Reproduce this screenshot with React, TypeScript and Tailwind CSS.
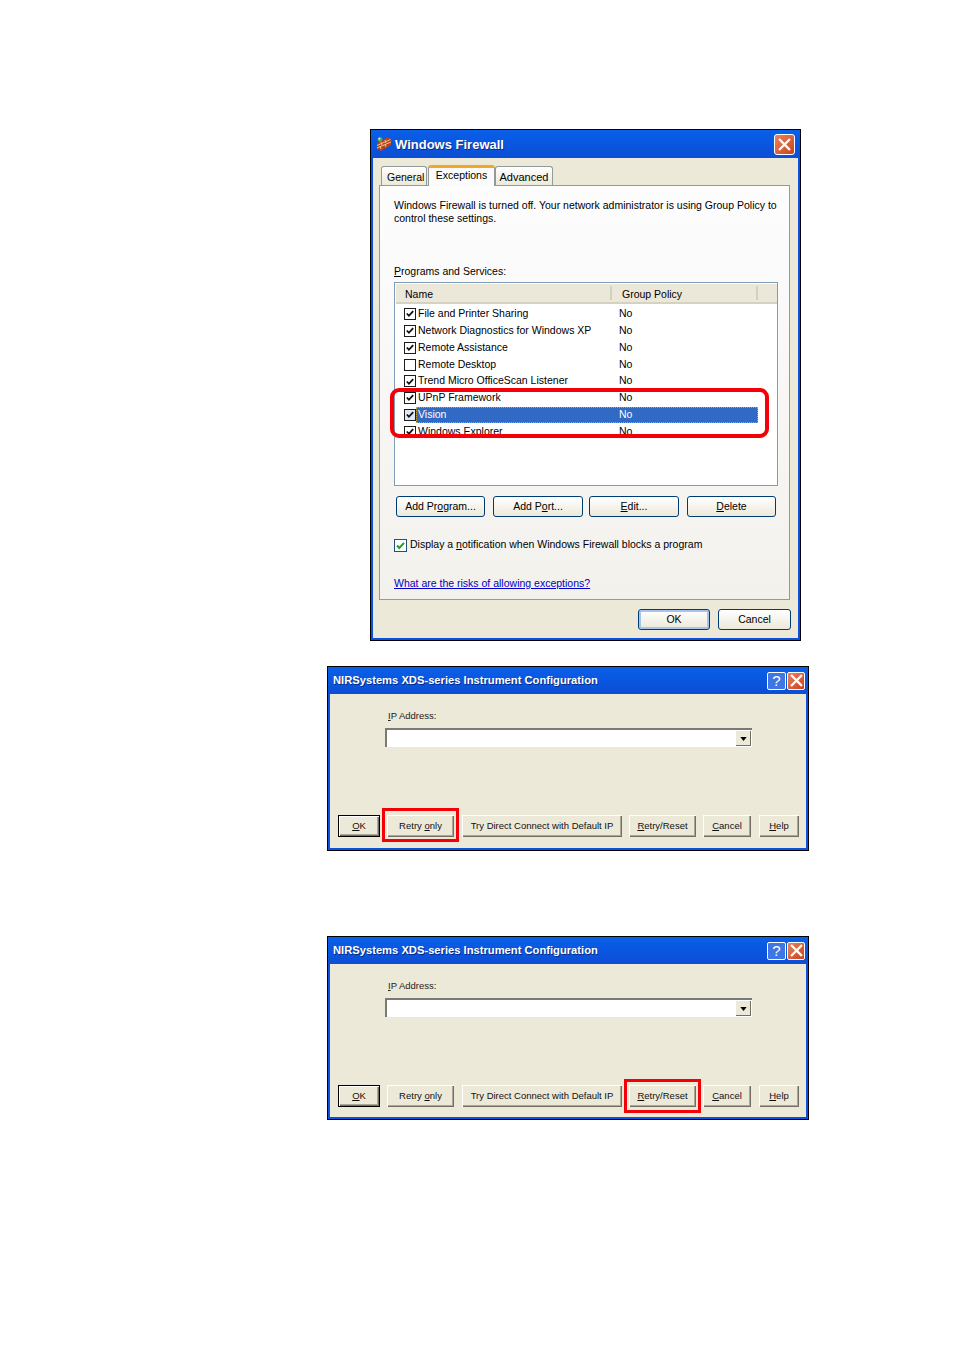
import React from "react";

const font = "font-['Liberation_Sans',Arial,sans-serif]";

const CheckIcon = ({ color = "#21a121" }: { color?: string }) => (
  <svg viewBox="0 0 11 11" className="w-[11px] h-[11px]">
    <path d="M2 5.5 L4.3 8 L9 2.8" fill="none" stroke={color} strokeWidth="2" />
  </svg>
);

const CloseGlyph = () => (
  <svg viewBox="0 0 14 14" className="w-[13px] h-[13px]">
    <path d="M2 2 L12 12 M12 2 L2 12" stroke="#fff" strokeWidth="2.4" strokeLinecap="square" />
  </svg>
);

const FirewallIcon = () => (
  <svg viewBox="0 0 16 16" className="w-[16px] h-[16px]">
    <path d="M1 7 L12 1 L15 3 L15 9 L5 15 L1 13 Z" fill="#b5401c" />
    <path d="M1 9.5 L14.5 3.5 M1 12 L15 6 M5 6 L6 9 M9 4 L10 7 M4 10 L5 13 M9 8.5 L10 11" stroke="#f2c28a" strokeWidth="1" fill="none" />
    <circle cx="4" cy="3.5" r="2.4" fill="#49b04a" />
    <circle cx="3.3" cy="2.8" r="1" fill="#bfe8ff" />
  </svg>
);

// XP luna push button
const XpButton = ({ className = "", children, isDefault = false }: { className?: string; children: React.ReactNode; isDefault?: boolean }) => (
  <button
    className={`h-[21px] rounded-[3px] border border-[#003c74] bg-gradient-to-b from-white to-[#ece9da] text-[10.5px] leading-none text-black ${isDefault ? "shadow-[inset_0_0_0_2px_#a9c4ec]" : ""} ${className}`}
  >
    {children}
  </button>
);

// Old style raised button for the instrument dialog
const ClassicButton = ({ className = "", children, isDefault = false }: { className?: string; children: React.ReactNode; isDefault?: boolean }) => (
  <button
    className={`block h-[22px] bg-[#ece9d8] text-[9.5px] leading-none text-[#111] shadow-[inset_1px_1px_0_#fff,inset_-1px_-1px_0_#716f64,inset_-2px_-2px_0_#aca899] ${isDefault ? "border border-black" : ""} ${className}`}
  >
    {children}
  </button>
);

const programs = [
  { name: "File and Printer Sharing", checked: true, h: "h-[17px]" },
  { name: "Network Diagnostics for Windows XP", checked: true, h: "h-[17px]" },
  { name: "Remote Assistance", checked: true, h: "h-[17px]" },
  { name: "Remote Desktop", checked: false, h: "h-[17px]" },
  { name: "Trend Micro OfficeScan Listener", checked: true, h: "h-[16px]" },
  { name: "UPnP Framework", checked: true, h: "h-[17px]" },
  { name: "Vision", checked: true, h: "h-[17px]", selected: true },
  { name: "Windows Explorer", checked: true, h: "h-[17px]" },
];

const FirewallDialog = () => (
  <div className="ml-[370px] w-[431px] border border-black bg-[#0a51e0] px-[2px] pb-[2px]">
    <div className="h-[28px] -mx-[2px] flex items-center pl-[5px] pr-[5px] bg-gradient-to-b from-[#0a60e8] via-[#0a56e0] to-[#0c4fd4]">
      <FirewallIcon />
      <span className="ml-[3px] mt-[2px] text-[13px] font-bold text-white [text-shadow:1px_1px_0_#0a2a80]">Windows Firewall</span>
      <span className="ml-auto w-[21px] h-[21px] rounded-[3px] border border-white bg-gradient-to-br from-[#e8835c] to-[#c9401c] flex items-center justify-center">
        <CloseGlyph />
      </span>
    </div>
    <div className="bg-[#ece9d8] h-[480px] pt-[6px] pl-[6px]">
      <div className="flex items-end ml-[2px] h-[21px] text-[11px] text-black">
        <div className="w-[46px] h-[19px] border border-b-0 border-[#919b9c] rounded-t-[3px] bg-gradient-to-b from-white to-[#ece9d8] pl-[5px] text-[10.5px] leading-[20px]">General</div>
        <div className="relative z-10 w-[67px] h-[21px] -mb-[1px] ml-[1px] border-x border-[#919b9c] border-t-[3px] border-t-[#f5a623] rounded-t-[3px] bg-[#fbfbfb] text-center text-[10.5px] leading-[15px]">Exceptions</div>
        <div className="w-[58px] h-[19px] border border-b-0 border-[#919b9c] rounded-t-[3px] bg-gradient-to-b from-white to-[#ece9d8] text-center leading-[20px]">Advanced</div>
      </div>
      <div className="w-[411px] h-[415px] border border-[#919b9c] bg-gradient-to-b from-[#fdfdfe] to-[#f3f1ec] pl-[14px] pt-[13px] text-[10.5px] text-black">
        <p className="leading-[13px] w-[390px]">
          Windows Firewall is turned off. Your network administrator is using Group Policy to control these settings.
        </p>
        <p className="mt-[40px] leading-[13px]"><u>P</u>rograms and Services:</p>
        <div className="relative mt-[4px] w-[384px] h-[204px] border border-[#7f9db9] bg-white">
          <div className="flex h-[20px] ml-[1px] mt-[1px] bg-[#ebe8d9] border-b-2 border-[#d6d2c2] leading-[20px]">
            <div className="w-[216px] pl-[9px] border-r-2 border-[#d4d0c0] my-[2px] leading-[16px]">Name</div>
            <div className="w-[146px] pl-[10px] border-r-2 border-[#d4d0c0] my-[2px] leading-[16px]">Group Policy</div>
          </div>
          <div className="pt-[1px]">
            {programs.map((row) => (
              <div key={row.name} className={`flex items-center pl-[9px] ${row.h}`}>
                <span className={`w-[12px] h-[12px] shrink-0 border border-[#1c1c1c] flex items-center justify-center ${row.selected ? "bg-[#dfe8f6]" : "bg-white"}`}>
                  {row.checked && <CheckIcon color="#101010" />}
                </span>
                <div className={`flex w-[342px] h-[16px] leading-[15px] shrink-0 ${row.selected ? "bg-[#316ac5] text-white outline-1 outline-dotted outline-[#c9a14a] -outline-offset-1" : ""}`}>
                  <span className="w-[203px] pl-[2px]">{row.name}</span>
                  <span>No</span>
                </div>
              </div>
            ))}
          </div>
          <div className="absolute left-[-5px] top-[105px] w-[379px] h-[50px] border-[4px] border-[#f40009] rounded-[9px]" />
        </div>
        <div className="flex mt-[10px] ml-[2px]">
          <XpButton className="w-[89px]">Add Pr<u>o</u>gram...</XpButton>
          <XpButton className="w-[90px] ml-[8px]">Add P<u>o</u>rt...</XpButton>
          <XpButton className="w-[90px] ml-[6px]"><u>E</u>dit...</XpButton>
          <XpButton className="w-[89px] ml-[8px]"><u>D</u>elete</XpButton>
        </div>
        <div className="flex items-center mt-[21px] h-[14px]">
          <span className="w-[13px] h-[13px] border border-[#1c5180] bg-white flex items-center justify-center">
            <CheckIcon />
          </span>
          <span className="ml-[3px]">Display a <u>n</u>otification when Windows Firewall blocks a program</span>
        </div>
        <a className="block mt-[24px] leading-[14px] underline text-[#0000c8]">What are the risks of allowing exceptions?</a>
      </div>
      <div className="flex mt-[9px] ml-[259px]">
        <XpButton className="w-[72px]" isDefault>OK</XpButton>
        <XpButton className="w-[73px] ml-[8px]">Cancel</XpButton>
      </div>
    </div>
  </div>
);

const InstrumentDialog = ({ highlight, height }: { highlight: "retry" | "reset"; height: string }) => (
  <div className={`ml-[327px] w-[482px] border border-black bg-[#0a51e0] px-[2px] pb-[2px] ${height} flex flex-col`}>
    <div className="h-[27px] -mx-[2px] shrink-0 flex items-center pl-[5px] pr-[3px] bg-gradient-to-b from-[#0a60e8] via-[#0a56e0] to-[#0c4fd4]">
      <span className="text-[11.2px] font-bold text-white [text-shadow:1px_1px_0_#0a2a80]">NIRSystems XDS-series Instrument Configuration</span>
      <span className="ml-auto w-[19px] h-[18px] rounded-[2px] border border-white bg-[#3f76e6] text-white text-[15px] leading-none flex items-center justify-center">?</span>
      <span className="ml-[1px] w-[18px] h-[18px] rounded-[2px] border border-white bg-gradient-to-br from-[#e8835c] to-[#c9401c] flex items-center justify-center">
        <CloseGlyph />
      </span>
    </div>
    <div className="flex-1 bg-[#ece9d8] text-[#222] pt-[15px]">
      <p className="ml-[58px] text-[9.5px] leading-[14px]"><u>I</u>P Address:</p>
      <div className="flex items-center justify-end ml-[55px] mt-[5px] w-[367px] h-[19px] bg-white border-t-2 border-l-2 border-[#7b7a72] pr-[1px]">
        <span className="w-[15px] h-[15px] bg-[#ece9d8] shadow-[inset_-1px_-1px_0_#716f64] flex items-center justify-center">
          <svg viewBox="0 0 8 5" className="w-[7px] h-[4px]"><path d="M0 0 H8 L4 5 Z" fill="#000" /></svg>
        </span>
      </div>
      <div className="flex mt-[68px] ml-[8px]">
        <ClassicButton className="w-[42px]" isDefault><u>O</u>K</ClassicButton>
        <div className="relative w-[67px] ml-[7px]">
          <ClassicButton className="w-full">Retry <u>o</u>nly</ClassicButton>
          {highlight === "retry" && <div className="absolute -left-[5px] -right-[5px] -top-[7px] -bottom-[5px] border-[3px] border-[#f40009]" />}
        </div>
        <ClassicButton className="w-[160px] ml-[8px]">Try Direct Connect with Default IP</ClassicButton>
        <div className="relative w-[67px] ml-[7px]">
          <ClassicButton className="w-full"><u>R</u>etry/Reset</ClassicButton>
          {highlight === "reset" && <div className="absolute -left-[5px] -right-[5px] -top-[6px] -bottom-[6px] border-[3px] border-[#f40009]" />}
        </div>
        <ClassicButton className="w-[48px] ml-[7px]"><u>C</u>ancel</ClassicButton>
        <ClassicButton className="w-[40px] ml-[8px]"><u>H</u>elp</ClassicButton>
      </div>
    </div>
  </div>
);

export default function App() {
  return (
    <div className={`${font} bg-white w-[955px] h-[1350px] pt-[129px] overflow-hidden`}>
      <FirewallDialog />
      <div className="mt-[25px]">
        <InstrumentDialog highlight="retry" height="h-[185px]" />
      </div>
      <div className="mt-[85px]">
        <InstrumentDialog highlight="reset" height="h-[184px]" />
      </div>
    </div>
  );
}
